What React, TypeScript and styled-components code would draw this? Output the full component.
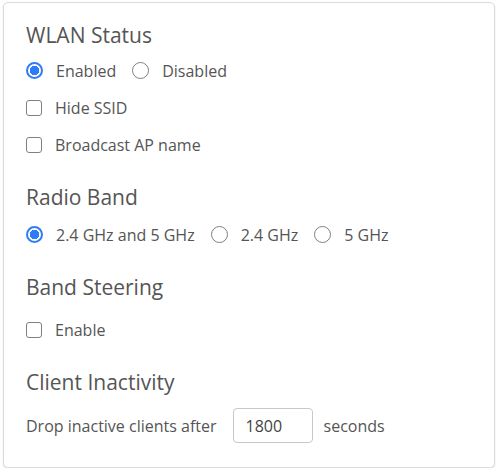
import React from 'react'
import styled, { createGlobalStyle } from 'styled-components'

const GlobalStyle = createGlobalStyle`
  html, body {
    margin: 0;
    padding: 0;
    background: #ffffff;
    font-family: "Open Sans", "Noto Sans", Arial, sans-serif;
  }
`

const Card = styled.div`
  box-sizing: border-box;
  margin: 2px 0 0 3px;
  width: 492px;
  height: 466px;
  padding: 18px 22px 0 22px;
  border: 1px solid #dcdcdc;
  border-radius: 5px;
  box-shadow: 0 1px 2px rgba(0, 0, 0, 0.12);
  background: #fff;
  color: #555;
`

const Section = styled.section`
  display: flex;
  flex-direction: column;
  & + & {
    margin-top: 20px;
  }
`

const Heading = styled.h3<{ $gap: number }>`
  margin: 0 0 ${(p) => p.$gap}px 0;
  font-size: 21px;
  line-height: 28px;
  font-weight: 400;
  color: #555;
`

const Row = styled.div`
  display: flex;
  align-items: center;
  height: 37px;
  font-size: 16px;
`

const Option = styled.label`
  display: flex;
  align-items: center;
  gap: 13px;
  margin-right: 16px;
  cursor: pointer;
`

const Radio = styled.input.attrs({ type: 'radio' })`
  appearance: none;
  box-sizing: border-box;
  margin: 0;
  width: 17px;
  height: 17px;
  border-radius: 50%;
  border: 1.5px solid #808080;
  background: #fff;
  &:checked {
    border: 2px solid #2f7df6;
    background: radial-gradient(circle, #2f7df6 0 4.5px, #fff 5px);
  }
`

const Checkbox = styled.input.attrs({ type: 'checkbox' })`
  appearance: none;
  box-sizing: border-box;
  margin: 0;
  width: 16px;
  height: 16px;
  border-radius: 3px;
  border: 1.5px solid #808080;
  background: #fff;
`

const NumberInput = styled.input`
  box-sizing: border-box;
  width: 80px;
  height: 35px;
  margin: 0 11px 0 16px;
  padding: 0 12px;
  border: 1px solid #c8c8c8;
  border-radius: 4px;
  font-family: inherit;
  font-size: 16px;
  color: #444;
  outline: none;
`

const App = () => {
  return (
    <>
      <GlobalStyle />
      <Card>
        <Section>
          <Heading $gap={3}>WLAN Status</Heading>
          <Row>
            <Option>
              <Radio name="wlan" defaultChecked />
              Enabled
            </Option>
            <Option>
              <Radio name="wlan" />
              Disabled
            </Option>
          </Row>
          <Row>
            <Option>
              <Checkbox />
              Hide SSID
            </Option>
          </Row>
          <Row>
            <Option>
              <Checkbox />
              Broadcast AP name
            </Option>
          </Row>
        </Section>

        <Section>
          <Heading $gap={5}>Radio Band</Heading>
          <Row>
            <Option>
              <Radio name="band" defaultChecked />
              2.4 GHz and 5 GHz
            </Option>
            <Option>
              <Radio name="band" />
              2.4 GHz
            </Option>
            <Option>
              <Radio name="band" />
              5 GHz
            </Option>
          </Row>
        </Section>

        <Section>
          <Heading $gap={10}>Band Steering</Heading>
          <Row>
            <Option>
              <Checkbox />
              Enable
            </Option>
          </Row>
        </Section>

        <Section>
          <Heading $gap={11}>Client Inactivity</Heading>
          <Row>
            Drop inactive clients after
            <NumberInput defaultValue="1800" />
            seconds
          </Row>
        </Section>
      </Card>
    </>
  )
}

export default App
